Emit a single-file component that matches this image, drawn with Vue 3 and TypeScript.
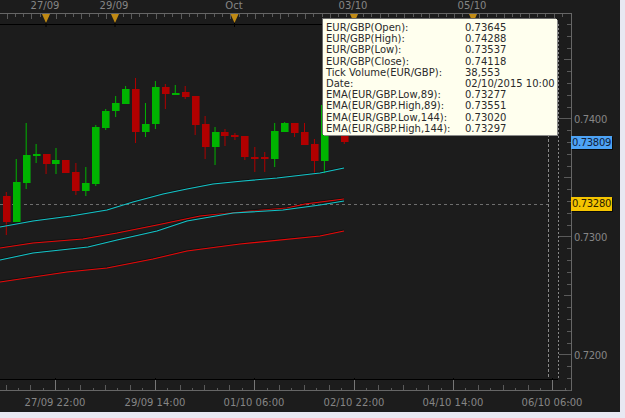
<script setup lang="ts">
// open, close as body top/bottom in px: [top wick, body top, body bottom, bottom wick, up]
type Bar = [number, number, number, number, boolean]

const bars: (Bar | null)[] = [
  [192, 196, 222, 235, false],
  [159, 182, 222, 222, true],
  [123, 155, 183, 189, true],
  [144, 154, 155.5, 163, true],
  [154, 154, 164, 174, false],
  [148, 160, 164, 174, true],
  [160, 160, 173, 173, false],
  [163, 172, 191, 195, false],
  [167, 183, 191, 196, true],
  [125, 127, 184, 186, true],
  [109, 111, 128, 130, true],
  [96, 103, 111, 117, true],
  [86, 89, 104, 104, true],
  [78, 89, 132, 143, false],
  [103, 124, 132, 137, true],
  [81, 87, 124, 129, true],
  [84, 87, 94, 109, false],
  [85, 92.5, 94, 95, true],
  [86, 92, 97, 99, false],
  [96, 96, 125, 135, false],
  [116, 124, 147, 159, false],
  [127, 132, 147, 165, true],
  [129, 132, 136, 146, false],
  [133, 135, 136.5, 140, false],
  [136, 136, 157, 160, false],
  [147, 156.5, 158, 172, false],
  [152, 157, 159, 172, false],
  [123, 131, 159, 167, true],
  [122, 123, 132, 132, true],
  [123, 123, 133, 137, false],
  [123, 132, 145, 145, false],
  [139, 144, 161, 173, false],
  [100, 105, 161, 173, true],
  null,
  [120, 125, 142, 144, false],
]

const candles = bars.flatMap((b, i) => {
  if (!b) return []
  const x = 6.3 + i * 9.94
  return [{
    x,
    left: Math.round(x - 3.5),
    top: b[0],
    y: Math.round(b[1]),
    h: Math.max(Math.round(b[2] - b[1]), 1),
    bottom: b[3],
    color: b[4] ? '#00b400' : '#b00000',
    edge: b[4] ? '#0f6f12' : '#6f0c0c',
  }]
})

const cyanA = '0,227 33,221 71,216 107,210 133,202 163,194 187,189 213,184 243,181 277,178 320,173 344,168'
const redA = '0,248 33,243 83,239 117,233 157,225 200,216 250,211 287,208 305,204 344,199'
const cyanB = '0,260 33,253 88,247 117,240 157,231 187,221 233,213 283,210 320,205 344,201'
const redB = '0,282 67,272 107,268 153,259 187,251 240,244 320,236 344,231'
const emaLines = [
  { points: cyanA, color: '#12c4c8' },
  { points: redA, color: '#e80808' },
  { points: cyanB, color: '#12c4c8' },
  { points: redB, color: '#e80808' },
]

const topTicks = Array.from({ length: 68 }, (_, i) => {
  const x = 6.5 + i * 8.29
  return { x, h: i % 3 === 0 ? 5 : 3 }
})
const bottomTicks = Array.from({ length: 46 }, (_, i) => {
  const x = 5.5 + i * 12.43
  return { x, h: i % 2 === 0 ? 5 : 2 }
})
const majorX = [55, 155, 254, 354, 453, 552]
const priceTicks = Array.from({ length: 33 }, (_, i) => {
  const y = 24 + i * 11.8
  const k = (i - 8) % 10
  const h = k === 0 ? 12 : k === 5 || k === -5 ? 7 : 4
  return { y, h }
})

const topLabels = [
  { x: 45, t: '27/09' },
  { x: 114, t: '29/09' },
  { x: 234, t: 'Oct' },
  { x: 353, t: '03/10' },
  { x: 472, t: '05/10' },
]
const markers = [46, 115, 234.5, 354, 473]
const bottomLabels = [
  { x: 55, t: '27/09 22:00' },
  { x: 155, t: '29/09 14:00' },
  { x: 254, t: '01/10 06:00' },
  { x: 354, t: '02/10 22:00' },
  { x: 453, t: '04/10 14:00' },
  { x: 552, t: '06/10 06:00' },
]
const priceLabels = [
  { y: 123, t: '0.7400' },
  { y: 241, t: '0.7300' },
  { y: 359, t: '0.7200' },
]

const rows = [
  ['EUR/GBP(Open):', '0.73645'],
  ['EUR/GBP(High):', '0.74288'],
  ['EUR/GBP(Low):', '0.73537'],
  ['EUR/GBP(Close):', '0.74118'],
  ['Tick Volume(EUR/GBP):', '38,553'],
  ['Date:', '02/10/2015 10:00'],
  ['EMA(EUR/GBP.Low,89):', '0.73277'],
  ['EMA(EUR/GBP.High,89):', '0.73551'],
  ['EMA(EUR/GBP.Low,144):', '0.73020'],
  ['EMA(EUR/GBP.High,144):', '0.73297'],
]
</script>

<template>
  <div class="page">
    <div class="chart">
      <svg class="plot" width="620" height="412" viewBox="0 0 620 412">
        <!-- top time axis -->
        <g class="axis-text">
          <text v-for="l in topLabels" :key="l.t" :x="l.x" y="9" text-anchor="middle">{{ l.t }}</text>
        </g>
        <g class="crisp">
          <rect x="0" y="13" width="572" height="1" fill="#666" />
          <rect x="0" y="24" width="558" height="1" fill="#000" />
          <rect v-for="t in topTicks" :key="t.x" :x="t.x" y="14" width="1" :height="t.h" fill="#5a5a5a" />
        </g>
        <g v-for="m in markers" :key="m">
          <rect :x="m - 0.5" y="22" width="1" height="5" fill="#000" />
          <polygon :points="`${m - 4},14 ${m + 4},14 ${m},23`" fill="#c08a14" />
        </g>

        <!-- dashed guides -->
        <g class="crisp">
          <line x1="0" y1="204.5" x2="548" y2="204.5" stroke="#6e6e6e" stroke-dasharray="3 3" />
          <line x1="548.5" y1="24" x2="548.5" y2="379" stroke="#888" stroke-dasharray="3 2" />
          <line x1="558.5" y1="24" x2="558.5" y2="379" stroke="#888" stroke-dasharray="2 2" />
        </g>

        <!-- candles -->
        <g v-for="c in candles" :key="c.x">
          <rect :x="c.x - 0.5" :y="c.top" width="1" :height="c.bottom - c.top" :fill="c.color" />
          <rect class="crisp" :x="c.left" :y="c.y" width="8" :height="c.h" :fill="c.edge" />
          <rect class="crisp" :x="c.left" :y="c.y" width="7" :height="c.h" :fill="c.color" />
        </g>

        <!-- EMA lines, each with a dark edge above it -->
        <g v-for="l in emaLines" :key="l.points" fill="none">
          <polyline :points="l.points" stroke="#000" stroke-opacity="0.4" transform="translate(0 -1)" />
          <polyline :points="l.points" :stroke="l.color" stroke-width="1.05" />
        </g>

        <!-- bottom time axis -->
        <g class="crisp">
          <rect x="0" y="379" width="558" height="1" fill="#000" />
          <rect x="0" y="390" width="572" height="1" fill="#666" />
          <rect v-for="t in bottomTicks" :key="t.x" :x="t.x" :y="390 - t.h" width="1" :height="t.h" fill="#5a5a5a" />
          <g v-for="x in majorX" :key="x">
            <rect :x="x" y="378" width="1" height="1" fill="#000" />
            <rect :x="x" y="380" width="1" height="10" fill="#777" />
          </g>
        </g>
        <g class="axis-text">
          <text v-for="l in bottomLabels" :key="l.t" :x="l.x" y="406" text-anchor="middle">{{ l.t }}</text>
        </g>

        <!-- price axis -->
        <g class="crisp">
          <rect x="571" y="13" width="1" height="378" fill="#666" />
          <rect v-for="t in priceTicks" :key="t.y" :x="571 - t.h" :y="t.y" :width="t.h" height="1" fill="#5a5a5a" />
        </g>
        <g class="axis-text price-text">
          <text v-for="l in priceLabels" :key="l.t" x="574" :y="l.y">{{ l.t }}</text>
        </g>
      </svg>

      <div class="tag tag-blue">0.73809</div>
      <div class="tag tag-yellow">0.73280</div>

      <div class="tooltip">
        <template v-for="r in rows" :key="r[0]">
          <span>{{ r[0] }}</span>
          <span>{{ r[1] }}</span>
        </template>
      </div>
    </div>
  </div>
</template>

<style scoped>
.page {
  width: 625px;
  height: 418px;
  background: #e8e8f2;
  overflow: hidden;
}

.chart {
  position: relative;
  width: 620px;
  height: 412px;
  background: #1c1c1c;
  font-family: "DejaVu Sans", sans-serif;
  font-size: 10px;
}

.plot {
  display: block;
}

.crisp {
  shape-rendering: crispEdges;
}

.axis-text {
  fill: #858585;
  font-family: "DejaVu Sans", sans-serif;
  font-size: 10px;
}

.price-text {
  letter-spacing: -0.35px;
}

.tag {
  position: absolute;
  left: 571px;
  width: 40px;
  height: 13px;
  line-height: 13px;
  padding-left: 1px;
  letter-spacing: -0.35px;
  color: #10203a;
  box-shadow: 1px 1px 0 #0a0a0a;
}

.tag-blue {
  top: 136px;
  background: #4da3f5;
}

.tag-yellow {
  top: 197px;
  height: 14px;
  line-height: 14px;
  background: #f5c400;
  color: #2a2000;
}

.tooltip {
  position: absolute;
  left: 323px;
  top: 19px;
  width: 234px;
  height: 116px;
  box-sizing: border-box;
  padding: 3px 3px 0;
  background: #ffffee;
  color: #2b2b2b;
  display: grid;
  grid-template-columns: 139px 1fr;
  grid-auto-rows: 11.2px;
  line-height: 11.2px;
  white-space: nowrap;
  box-shadow: 1px 1px 0 #8a8a8a, -1px -1px 0 #6a6a6a;
}
</style>
